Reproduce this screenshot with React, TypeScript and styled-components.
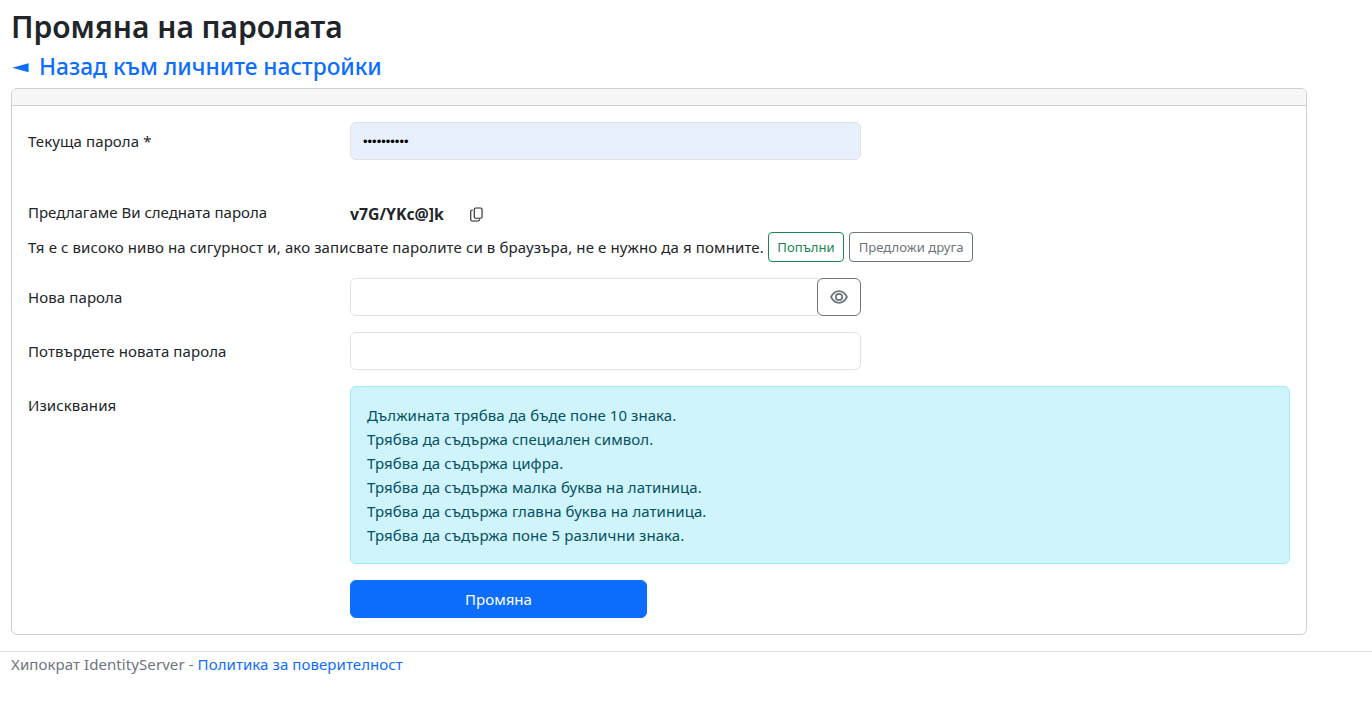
import React from "react";
import styled, { createGlobalStyle } from "styled-components";

const Global = createGlobalStyle`
  html, body { margin: 0; padding: 0; background: #fff; }
  body {
    font-family: "Noto Sans", "Open Sans", "Liberation Sans", sans-serif;
    font-size: 15px;
    letter-spacing: 0.1px;
    line-height: 24px;
    color: #212529;
  }
  * { box-sizing: border-box; }
`;

const Page = styled.div`
  padding: 0 11px;
  width: 1307px;
`;

const Title = styled.h1`
  margin: 0;
  height: 50px;
  padding-top: 5px;
  font-size: 30px;
  letter-spacing: 0;
  line-height: 44px;
  font-weight: 600;
`;

const BackLink = styled.a`
  display: flex;
  align-items: center;
  height: 38px;
  padding-bottom: 5px;
  font-size: 22.7px;
  letter-spacing: 0;
  line-height: 34px;
  font-weight: 500;
  color: #0d6efd;
  text-decoration: none;
`;

const BackArrow = styled.span`
  display: inline-block;
  width: 28px;
  font-size: 20px;
  transform: translateX(-4px) scale(1.35, 0.75);
  transform-origin: 0 50%;
`;

const Card = styled.section`
  width: 1296px;
  height: 547px;
  border: 1px solid #d0d0d0;
  border-radius: 6px;
  overflow: hidden;
`;

const CardHeader = styled.div`
  height: 17px;
  background: #f7f7f7;
  border-bottom: 1px solid #d0d0d0;
`;

const CardBody = styled.div`
  padding: 16px;
  display: flex;
  flex-direction: column;
`;

const Row = styled.div<{ $mb?: number }>`
  display: grid;
  grid-template-columns: 322px 511px;
  margin-bottom: ${(p) => p.$mb ?? 16}px;
`;

const WideRow = styled(Row)`
  grid-template-columns: 322px 940px;
`;

const Label = styled.label`
  padding-top: 7px;
  line-height: 24px;
`;

const Input = styled.input<{ $filled?: boolean; $joined?: boolean }>`
  display: block;
  width: 100%;
  height: 38px;
  padding: 6px 12px;
  border: 1px solid #dee2e6;
  border-radius: ${(p) => (p.$joined ? "6px 0 0 6px" : "6px")};
  background: ${(p) => (p.$filled ? "#e8f0fe" : "#fff")};
  font-family: "Liberation Sans", sans-serif;
  font-size: 13px;
  letter-spacing: 0;
  color: #000;
  outline: none;
`;

const InputGroup = styled.div`
  display: flex;
`;

const EyeButton = styled.button`
  flex: 0 0 44px;
  margin-left: -1px;
  height: 38px;
  border: 1px solid #6c757d;
  border-radius: 6px;
  background: #fff;
  color: #6c757d;
  display: flex;
  align-items: center;
  justify-content: center;
  padding: 0;
  position: relative;
`;

const SuggestRow = styled.div`
  display: grid;
  grid-template-columns: 322px 1fr;
  height: 26px;
  margin-top: 40px;
`;

const SuggestLabel = styled.span`
  line-height: 24px;
  letter-spacing: 0;
`;

const Suggested = styled.div`
  display: flex;
  align-items: center;
  height: 28px;
  font-size: 15.8px;
  letter-spacing: 0;
  font-weight: 700;
`;

const CopyGlyph = styled.svg`
  margin-left: 26px;
  width: 13px;
  height: 15px;
  color: #212529;
`;

const ExplainRow = styled.div`
  display: flex;
  align-items: center;
  gap: 4px;
  height: 30px;
  margin: 6px 0 16px;
  letter-spacing: 0.11px;
`;

const SmallButton = styled.button<{ $tone: string }>`
  height: 30px;
  padding: 0 8.5px;
  border: 1px solid ${(p) => p.$tone};
  border-radius: 4px;
  background: #fff;
  color: ${(p) => p.$tone};
  font: inherit;
  font-size: 13.1px;
  letter-spacing: 0;
  line-height: 20px;
  & + & { margin-left: 1px; }
`;

const Alert = styled.div`
  height: 178px;
  padding: 16px;
  border: 1px solid #9eeaf9;
  border-radius: 6px;
  background: #cff4fc;
  color: #055160;
`;

const AlertLine = styled.div`
  height: 24px;
  letter-spacing: 0.07px;
`;

const Submit = styled.button`
  width: 297px;
  height: 38px;
  border: 1px solid #0d6efd;
  border-radius: 6px;
  background: #0d6efd;
  color: #fff;
  font: inherit;
  font-size: 15px;
`;

const Footer = styled.footer`
  margin-top: 16px;
  border-top: 1px solid #dee2e6;
  padding: 0 11px;
  color: #6c757d;
  height: 52px;
  letter-spacing: 0.08px;
`;

const FooterLink = styled.a`
  color: #0d6efd;
  text-decoration: none;
`;

const requirements = [
  "Дължината трябва да бъде поне 10 знака.",
  "Трябва да съдържа специален символ.",
  "Трябва да съдържа цифра.",
  "Трябва да съдържа малка буква на латиница.",
  "Трябва да съдържа главна буква на латиница.",
  "Трябва да съдържа поне 5 различни знака.",
];

const CopyIcon = () => (
  <CopyGlyph viewBox="0 0 14 16" fill="none" stroke="currentColor" strokeWidth="1.2">
    <rect x="4.6" y="1" width="8.4" height="11" rx="1.6" />
    <path d="M3 3.2H2.4A1.6 1.6 0 0 0 0.8 4.8v8.6A1.6 1.6 0 0 0 2.4 15h6.2a1.6 1.6 0 0 0 1.6-1.6V13" />
  </CopyGlyph>
);

const EyeIcon = () => (
  <svg width="18" height="14" viewBox="0 0 18 14" fill="none" stroke="currentColor" strokeWidth="1.7">
    <path d="M1 7C3 3.2 5.8 1.2 9 1.2S15 3.2 17 7C15 10.8 12.2 12.8 9 12.8S3 10.8 1 7Z" strokeLinejoin="round" />
    <circle cx="9" cy="7" r="3.2" />
  </svg>
);

export default function App() {
  return (
    <>
      <Global />
      <Page>
        <Title>Промяна на паролата</Title>
        <BackLink href="#">
          <BackArrow>◄</BackArrow>
          Назад към личните настройки
        </BackLink>
        <Card>
          <CardHeader />
          <CardBody>
            <Row $mb={0}>
              <Label>Текуща парола *</Label>
              <Input type="password" defaultValue="1234567890" $filled />
            </Row>
            <SuggestRow>
              <SuggestLabel>Предлагаме Ви следната парола</SuggestLabel>
              <Suggested>
                v7G/YKc@]k
                <CopyIcon />
              </Suggested>
            </SuggestRow>
            <ExplainRow>
              <span>Тя е с високо ниво на сигурност и, ако записвате паролите си в браузъра, не е нужно да я помните.</span>
              <SmallButton $tone="#198754">Попълни</SmallButton>
              <SmallButton $tone="#6c757d">Предложи друга</SmallButton>
            </ExplainRow>
            <Row>
              <Label>Нова парола</Label>
              <InputGroup>
                <Input type="password" $joined />
                <EyeButton aria-label="Покажи"><EyeIcon /></EyeButton>
              </InputGroup>
            </Row>
            <Row>
              <Label>Потвърдете новата парола</Label>
              <Input type="password" />
            </Row>
            <WideRow>
              <Label>Изисквания</Label>
              <Alert>
                {requirements.map((r) => (
                  <AlertLine key={r}>{r}</AlertLine>
                ))}
              </Alert>
            </WideRow>
            <Row $mb={0}>
              <span />
              <Submit>Промяна</Submit>
            </Row>
          </CardBody>
        </Card>
      </Page>
      <Footer>
        Хипократ IdentityServer - <FooterLink href="#">Политика за поверителност</FooterLink>
      </Footer>
    </>
  );
}
